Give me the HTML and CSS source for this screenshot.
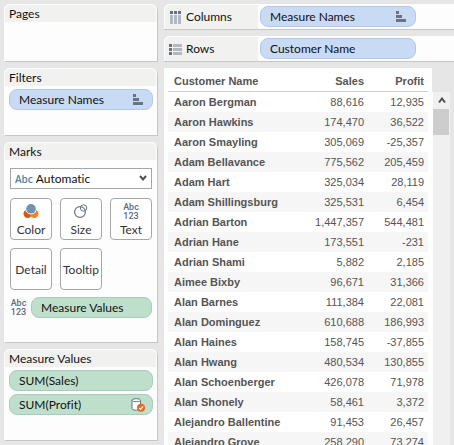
FILE: index.html
```html
<!DOCTYPE html>
<html lang="en">
<head>
<meta charset="utf-8">
<meta name="viewport" content="width=device-width, initial-scale=1">
<title>Worksheet</title>
<link rel="stylesheet" href="styles.css">
</head>
<body>
<div class="workspace">
  <aside class="sidebar">
    <section class="card card-pages">
      <h2 class="card-title">Pages</h2>
    </section>

    <section class="card card-filters">
      <h2 class="card-title">Filters</h2>
      <div class="pill-list">
        <button type="button" class="pill pill-blue"><span>Measure Names</span>
          <svg class="sort-icon" width="10" height="11" viewBox="0 0 10 11" aria-hidden="true"><path d="M0 0h3v3H0zM0 4h6v3H0zM0 8h10v3H0z"/></svg>
        </button>
      </div>
    </section>

    <section class="card card-marks">
      <h2 class="card-title">Marks</h2>
      <div class="marks-body">
        <div class="mark-type">
          <label class="mark-prefix" for="mark-type">Abc</label>
          <select id="mark-type" class="mark-select">
            <option>Automatic</option>
          </select>
          <svg class="mark-arrow" width="8" height="7" viewBox="0 0 8 7" aria-hidden="true"><path d="M1 1l3 3.5L7 1"/></svg>
        </div>
        <div class="mark-grid">
          <button type="button" class="mark-button">
            <svg width="16" height="16" viewBox="0 0 16 16" aria-hidden="true">
              <circle cx="4.7" cy="10.8" r="4.2" fill="#d45a10"/>
              <circle cx="11.3" cy="10.8" r="4.2" fill="#f4802a"/>
              <circle cx="8" cy="5.9" r="5.6" fill="#fff"/>
              <circle cx="8" cy="5.8" r="4.8" fill="#6a93b4"/>
            </svg>
            <span>Color</span>
          </button>
          <button type="button" class="mark-button">
            <svg width="16" height="16" viewBox="0 0 16 16" fill="none" stroke="#66768b" aria-hidden="true">
              <circle cx="7" cy="9" r="5.4" stroke-width="1.2"/>
              <circle cx="10.6" cy="5" r="3.2"/>
            </svg>
            <span>Size</span>
          </button>
          <button type="button" class="mark-button">
            <span class="text-glyph" aria-hidden="true">Abc<br>123</span>
            <span>Text</span>
          </button>
          <button type="button" class="mark-button mark-plain"><span>Detail</span></button>
          <button type="button" class="mark-button mark-plain"><span>Tooltip</span></button>
        </div>
        <div class="mark-field">
          <span class="text-glyph" aria-hidden="true">Abc<br>123</span>
          <button type="button" class="pill pill-green"><span>Measure Values</span></button>
        </div>
      </div>
    </section>

    <section class="card card-values">
      <h2 class="card-title">Measure Values</h2>
      <div class="pill-list">
        <button type="button" class="pill pill-green"><span>SUM(Sales)</span></button>
        <button type="button" class="pill pill-green"><span>SUM(Profit)</span>
          <svg class="source-icon" width="14" height="14" viewBox="0 0 14 14" aria-hidden="true">
            <path d="M1 2.2v8.4c0 1 1.900 1.600 4.300 1.600s4.200-.6 4.200-1.600V2.200" fill="#fff" stroke="#66727f"/>
            <ellipse cx="5.250" cy="2.200" rx="4.250" ry="1.500" fill="#fff" stroke="#66727f"/>
            <circle cx="10" cy="9.800" r="4" fill="#e8681c"/>
            <path d="M8 9.800l1.500 1.600 2.600-3" fill="none" stroke="#fff" stroke-width="1.200"/>
          </svg>
        </button>
      </div>
    </section>
  </aside>

  <main class="sheet">
    <section class="shelf">
      <h2 class="shelf-label">
        <svg width="13" height="13" viewBox="0 0 13 13" aria-hidden="true"><path fill="#68727f" d="M1 0h3v3H1zM5 0h3v3H5zM9 0h3v3H9z"/><path fill="#b2b8c0" d="M1 4h3v9H1zM5 4h3v9H5zM9 4h3v9H9z"/></svg>
        Columns
      </h2>
      <button type="button" class="pill pill-blue"><span>Measure Names</span>
        <svg class="sort-icon" width="10" height="11" viewBox="0 0 10 11" aria-hidden="true"><path d="M0 0h3v3H0zM0 4h6v3H0zM0 8h10v3H0z"/></svg>
      </button>
    </section>
    <section class="shelf">
      <h2 class="shelf-label">
        <svg width="13" height="13" viewBox="0 0 13 13" aria-hidden="true"><path fill="#68727f" d="M0 1h3v3H0zM0 5h3v3H0zM0 9h3v3H0z"/><path fill="#b2b8c0" d="M4 1h9v3H4zM4 5h9v3H4zM4 9h9v3H4z"/></svg>
        Rows
      </h2>
      <button type="button" class="pill pill-blue"><span>Customer Name</span></button>
    </section>

    <section class="view">
      <div class="view-data">
        <table class="crosstab">
          <thead>
            <tr><th scope="col">Customer Name</th><th scope="col">Sales</th><th scope="col">Profit</th></tr>
          </thead>
          <tbody>
            <tr><th scope="row">Aaron Bergman</th><td>88,616</td><td>12,935</td></tr>
            <tr><th scope="row">Aaron Hawkins</th><td>174,470</td><td>36,522</td></tr>
            <tr><th scope="row">Aaron Smayling</th><td>305,069</td><td>-25,357</td></tr>
            <tr><th scope="row">Adam Bellavance</th><td>775,562</td><td>205,459</td></tr>
            <tr><th scope="row">Adam Hart</th><td>325,034</td><td>28,119</td></tr>
            <tr><th scope="row">Adam Shillingsburg</th><td>325,531</td><td>6,454</td></tr>
            <tr><th scope="row">Adrian Barton</th><td>1,447,357</td><td>544,481</td></tr>
            <tr><th scope="row">Adrian Hane</th><td>173,551</td><td>-231</td></tr>
            <tr><th scope="row">Adrian Shami</th><td>5,882</td><td>2,185</td></tr>
            <tr><th scope="row">Aimee Bixby</th><td>96,671</td><td>31,366</td></tr>
            <tr><th scope="row">Alan Barnes</th><td>111,384</td><td>22,081</td></tr>
            <tr><th scope="row">Alan Dominguez</th><td>610,688</td><td>186,993</td></tr>
            <tr><th scope="row">Alan Haines</th><td>158,745</td><td>-37,855</td></tr>
            <tr><th scope="row">Alan Hwang</th><td>480,534</td><td>130,855</td></tr>
            <tr><th scope="row">Alan Schoenberger</th><td>426,078</td><td>71,978</td></tr>
            <tr><th scope="row">Alan Shonely</th><td>58,461</td><td>3,372</td></tr>
            <tr><th scope="row">Alejandro Ballentine</th><td>91,453</td><td>26,457</td></tr>
            <tr><th scope="row">Alejandro Grove</th><td>258,290</td><td>73,274</td></tr>
          </tbody>
        </table>
      </div>
      <div class="scrollbar">
        <button type="button" class="scroll-up" aria-label="Scroll up">
          <svg width="8" height="7" viewBox="0 0 8 7" aria-hidden="true"><path d="M1 5.500l3-4 3 4"/></svg>
        </button>
        <div class="scroll-thumb"></div>
      </div>
    </section>
  </main>
</div>
</body>
</html>
```
FILE: styles.css
```css
* {
  box-sizing: border-box;
}

body {
  margin: 0;
  background: #e6e6e6;
  color: #111;
  font: 12px/16px Lato, "Open Sans", sans-serif;
  font-variant-ligatures: none;
}

button,
select {
  margin: 0;
  padding: 0;
  color: inherit;
  font: inherit;
  font-variant-ligatures: none;
}

h2 {
  margin: 0;
  font: inherit;
  font-variant-ligatures: none;
}

svg {
  display: block;
  flex: none;
}

.workspace {
  display: grid;
  grid-template-columns: 153px minmax(0, 1fr);
  column-gap: 7px;
  height: 100vh;
  padding: 4px 0 0 4px;
  overflow: hidden;
}

/* Cards */

.sidebar {
  display: flex;
  flex-direction: column;
  gap: 7px;
}

.card {
  flex: none;
  border-radius: 6px 6px 0 0;
  background: #fdfdfd;
  box-shadow: 1px 1px 0 #c6c6c6;
}

.card-title {
  height: 18px;
  padding-left: 4px;
  border: 1px solid #fdfdfd;
  border-bottom: 0;
  border-radius: 6px 6px 0 0;
  background: #f1f1ef;
  line-height: 18px;
}

.card-pages {
  min-height: 57px;
}

.card-filters {
  min-height: 67px;
}

.card-marks {
  min-height: 200px;
}

.card-values {
  min-height: 91px;
}

.pill-list {
  display: flex;
  flex-direction: column;
  gap: 3px;
  padding: 3px 4px 0 5px;
}

.pill {
  display: flex;
  align-items: center;
  justify-content: space-between;
  height: 21px;
  padding: 0 9px;
  border: 1px solid;
  border-radius: 8px;
  white-space: nowrap;
}

.pill-blue {
  border-color: #b3c8e8;
  background: #c9daf4;
}

.pill-green {
  border-color: #a9cdb9;
  background: #bfdfcd;
}

.sort-icon {
  fill: #687485;
}

.source-icon {
  margin-right: -2px;
}

/* Marks card */

.marks-body {
  padding: 8px 5px 0 6px;
}

.mark-type {
  position: relative;
  display: flex;
  align-items: center;
  height: 21px;
  border: 1px solid #a6a6a6;
  background: #fff;
}

.mark-prefix {
  padding-left: 4px;
  color: #5484a0;
  font: 600 10px/16px "Open Sans", sans-serif;
}

.mark-select {
  flex: 1;
  min-width: 0;
  height: 19px;
  padding-left: 3px;
  border: 0;
  background: transparent;
  appearance: none;
}

.mark-arrow {
  position: absolute;
  right: 4px;
  fill: none;
  stroke: #505050;
  stroke-width: 2;
  pointer-events: none;
}

.mark-grid {
  display: grid;
  grid-template-columns: repeat(3, 42px);
  gap: 8px;
  margin-top: 9px;
}

.mark-button {
  display: flex;
  flex-direction: column;
  align-items: center;
  justify-content: space-between;
  height: 42px;
  padding: 4px 0 1px;
  border: 1px solid #a6a6a6;
  border-radius: 4px;
  background: #fff;
  color: #333;
}

.mark-plain {
  justify-content: center;
  padding: 2px 0 0;
}

.text-glyph {
  color: #5c6b82;
  font: 500 9px/9px Roboto, sans-serif;
  text-align: center;
}

.mark-field {
  display: grid;
  grid-template-columns: 17px minmax(0, 1fr);
  align-items: center;
  column-gap: 4px;
  margin-top: 7px;
}

/* Shelves */

.sheet {
  display: flex;
  flex-direction: column;
  gap: 7px;
  min-height: 0;
}

.shelf {
  display: grid;
  grid-template-columns: 94px minmax(0, 156px);
  flex: none;
  column-gap: 2px;
  align-items: center;
  height: 25px;
  border-radius: 6px 0 0;
  background: #fdfdfd;
  box-shadow: 0 1px 0 #c6c6c6;
}

.shelf-label {
  display: flex;
  align-items: center;
  gap: 4px;
  height: 25px;
  padding-left: 4px;
  border: 1px solid #fdfdfd;
  border-width: 1px 0 0 1px;
  border-radius: 6px 0 0;
  background: #f1f1ef;
}

/* View */

.view {
  display: flex;
  flex: 1;
  min-height: 0;
  padding-right: 4px;
}

.view-data {
  flex: 1;
  min-width: 0;
  padding: 0 4px;
  overflow: hidden;
  background: #fff;
}

.crosstab {
  width: 100%;
  border-collapse: separate;
  border-spacing: 0;
  table-layout: fixed;
  color: #555;
  font: 11px/20px "Liberation Sans", Arial, sans-serif;
}

.crosstab th,
.crosstab td {
  height: 20px;
  padding: 0 4px 0 0;
  text-align: right;
  white-space: nowrap;
}

.crosstab th:first-child {
  width: 136px;
  padding-left: 6px;
  text-align: left;
}

.crosstab th:last-child {
  width: 60px;
}

.crosstab thead th {
  height: 24px;
  padding-top: 4px;
  border-bottom: 1px solid #d0d0d0;
  line-height: 19px;
}

.crosstab tbody tr:nth-child(even) {
  background: #f6f6f6;
}

.scrollbar {
  width: 18px;
  margin-top: 24px;
  border-left: 1px solid #fff;
  background: #f0f0f0;
}

.scroll-up {
  display: flex;
  align-items: center;
  justify-content: center;
  width: 100%;
  height: 17px;
  border: 0;
  background: transparent;
}

.scroll-up svg {
  fill: none;
  stroke: #505050;
  stroke-width: 2;
}

.scroll-thumb {
  height: 26px;
  margin-right: 1px;
  background: #cdcdcd;
}
```
